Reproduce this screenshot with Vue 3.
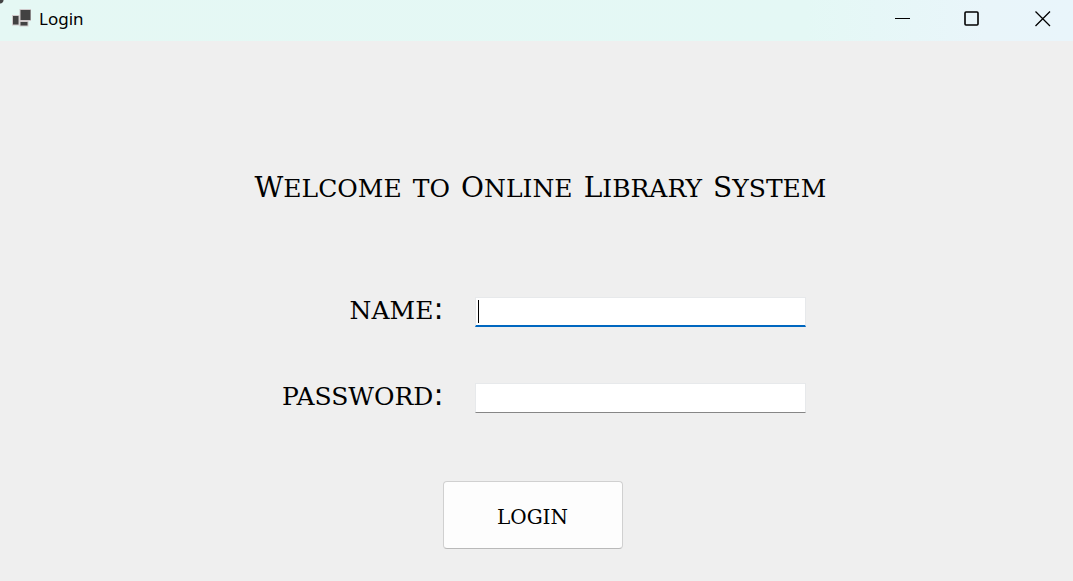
<script setup>
import { ref, onMounted } from 'vue'

const heading = ['Welcome', 'to', 'Online', 'Library', 'System']
const name = ref('')
const password = ref('')
const nameInput = ref(null)

onMounted(() => nameInput.value.focus())
</script>

<template>
  <div class="window">
    <header class="titlebar">
      <svg class="app-icon" width="20" height="20" viewBox="0 0 20 20" aria-hidden="true">
        <g fill="#424242" stroke="#cfc9ca" stroke-width="1">
          <rect x="9" y="0.500" width="11" height="11" />
          <rect x="1.5" y="6.500" width="6.500" height="9.500" />
          <rect x="9" y="12.500" width="8" height="4.500" />
        </g>
      </svg>
      <span class="caption">Login</span>
      <div class="controls">
        <button type="button" aria-label="Minimize">
          <svg width="16" height="16" viewBox="0 0 16 16"><path d="M1 8.500H16" /></svg>
        </button>
        <button type="button" aria-label="Maximize">
          <svg width="16" height="16" viewBox="0 0 16 16"><rect x="1" y="2" width="13" height="13" rx="1" stroke-width="1.600" /></svg>
        </button>
        <button type="button" aria-label="Close">
          <svg width="16" height="16" viewBox="0 0 16 16"><path d="M.5 1.500L15 16M15 1.500L.5 16" stroke-width="1.300" /></svg>
        </button>
      </div>
    </header>

    <main>
      <h1><template v-for="word in heading" :key="word"><span class="word" :class="{ capital: word !== 'to' }">{{ word }}</span>{{ ' ' }}</template></h1>
      <form @submit.prevent>
        <label for="name">name<span class="colon">:</span></label>
        <div class="field">
          <input id="name" ref="nameInput" v-model="name" type="text" autocomplete="off" />
          <span class="caret"></span>
        </div>
        <label for="password">password<span class="colon">:</span></label>
        <div class="field">
          <input id="password" v-model="password" type="password" autocomplete="off" />
        </div>
        <button class="login" type="submit">login</button>
      </form>
    </main>
  </div>
</template>

<style>
body {
  margin: 0;
  background: #efefef;
}
</style>

<style scoped>
.window {
  display: flex;
  flex-direction: column;
  min-height: 100vh;
  overflow: hidden;
  background: #efefef;
  color: #000;
  font-family: "DejaVu Serif", serif;
}
.titlebar {
  display: flex;
  align-items: flex-start;
  height: 41px;
  background: radial-gradient(circle at 0 0, #444 3px, transparent 4px),
    linear-gradient(90deg, #e5f8f4 0%, #e4f8f5 75%, #e9f5fa 92%, #e9f5fb 100%);
}
.app-icon {
  margin: 9px 8px 0 11px;
}
.caption {
  font: 17px/38px "Noto Sans", sans-serif;
}
.controls {
  display: flex;
  margin-left: auto;
}
.controls button {
  display: flex;
  align-items: center;
  justify-content: center;
  width: 70px;
  height: 36px;
  padding: 0;
  border: 0;
  background: none;
}
.controls button:last-child {
  width: 72px;
  margin-right: -6px;
}
.controls svg {
  overflow: visible;
  fill: none;
  stroke: #000;
}
main {
  display: flex;
  flex-direction: column;
  align-items: center;
  padding-top: 120px;
}
h1 {
  margin: 0;
  padding-left: 8px;
  font-size: 35px;
  font-weight: 400;
  line-height: 48px;
  font-variant: small-caps;
  white-space: nowrap;
}
.word {
  display: inline-block;
}
.capital::first-letter {
  font-size: 28px;
}
form {
  display: grid;
  grid-template-columns: minmax(172px, auto) 331px;
  column-gap: 31px;
  row-gap: 56px;
  margin-top: 85px;
  padding-left: 4px;
}
label {
  font-size: 36px;
  font-weight: 400;
  line-height: 20px;
  font-variant: small-caps;
  text-align: right;
}
.colon {
  font-family: "DejaVu Sans", sans-serif;
  font-size: 30px;
}
.field {
  position: relative;
  height: 30px;
}
input {
  box-sizing: border-box;
  display: block;
  width: 100%;
  height: 30px;
  padding: 0 4px;
  border: 1px solid #e7e9eb;
  border-bottom-color: #868686;
  outline: 0;
  background: #fff;
  font: 22px "DejaVu Sans", sans-serif;
  caret-color: transparent;
}
#name {
  border-bottom: 2px solid #0067c0;
}
.caret {
  position: absolute;
  top: 3px;
  left: 3px;
  width: 1px;
  height: 23px;
  background: #000;
}
.login {
  grid-column: 1 / -1;
  justify-self: center;
  width: 180px;
  height: 68px;
  margin: 12px 12px 0 0;
  padding: 0 0 2px;
  border: 1px solid #d0d0d0;
  border-bottom-color: #b9b9b9;
  border-radius: 4px;
  background: #fdfdfd;
  color: #000;
  font: 400 28px "DejaVu Serif", serif;
  font-variant: small-caps;
}
</style>
